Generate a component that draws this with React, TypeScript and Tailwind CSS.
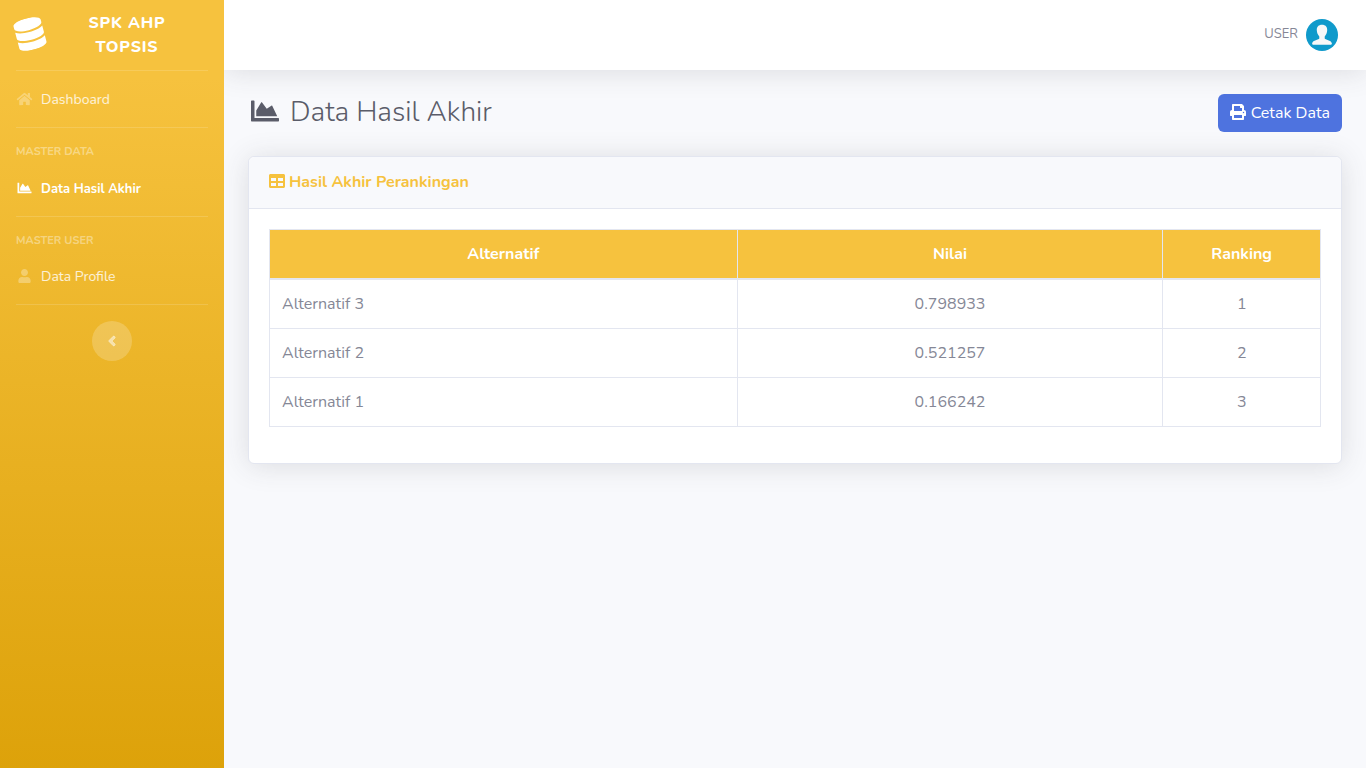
import { FaAngleLeft, FaChartArea, FaDatabase, FaHome, FaPrint, FaTable, FaUser } from 'react-icons/fa'

interface Result {
  name: string
  value: string
  rank: number
}

const results: Result[] = [
  { name: 'Alternatif 3', value: '0.798933', rank: 1 },
  { name: 'Alternatif 2', value: '0.521257', rank: 2 },
  { name: 'Alternatif 1', value: '0.166242', rank: 3 },
]

function Divider() {
  return <hr className="mx-4 border-t border-white/15" />
}

function Sidebar() {
  return (
    <aside className="flex w-56 shrink-0 flex-col bg-linear-to-b/srgb from-[#f6c23e] from-10% to-[#dda20a]">
      <a href="#" className="flex h-[70px] items-center pr-4 pb-0.5 pl-3.5 text-white">
        <FaDatabase className="size-8 shrink-0 -rotate-15" />
        <span className="mt-0.5 flex-1 px-4 text-center text-base leading-6 font-extrabold tracking-wider uppercase">
          SPK AHP TOPSIS
        </span>
      </a>
      <Divider />
      <nav className="flex flex-col">
        <a href="#" className="flex h-14 items-center gap-2 px-4 pt-0.5 text-sm text-white/80">
          <FaHome className="mb-0.5 h-[14px] w-[17px] text-white/30" />
          Dashboard
        </a>
        <Divider />
        <h2 className="mt-4 px-4 text-[11px] leading-4 font-bold text-white/40 uppercase">Master Data</h2>
        <a href="#" className="flex h-14 items-center gap-2 px-4 pt-1 text-[13px] font-bold text-white">
          <FaChartArea className="mb-1 h-[14px] w-[17px]" />
          Data Hasil Akhir
        </a>
        <Divider />
        <h2 className="mt-4 px-4 text-[11px] leading-4 font-bold text-white/40 uppercase">Master User</h2>
        <a href="#" className="flex h-[55px] items-center gap-2 px-4 text-sm text-white/80">
          <FaUser className="mb-0.5 h-[14px] w-[17px] text-white/30" />
          Data Profile
        </a>
        <Divider />
      </nav>
      <button
        type="button"
        aria-label="Toggle sidebar"
        className="mt-4 flex size-10 items-center justify-center self-center rounded-full bg-white/20 text-white/50"
      >
        <FaAngleLeft className="size-4" stroke="currentColor" strokeWidth={24} />
      </button>
    </aside>
  )
}

function Avatar() {
  return (
    <svg viewBox="0 0 32 32" className="size-8" aria-hidden="true">
      <circle cx="16" cy="16" r="16" fill="#109acb" />
      <path
        d="M16 5.800c-3.400 0-5.400 2.200-5.200 5.500.1 2.500 1 4.600 2.500 6.100v2.200c-.4 1.400-6.500 1.400-7.200 4.900 0 .8.700 1.300 1.500 1.300h16.800c.8 0 1.500-.5 1.500-1.300-.7-3.500-6.800-3.500-7.200-4.900v-2.200c1.500-1.500 2.400-3.600 2.500-6.100C21.400 8 19.400 5.800 16 5.800z"
        fill="#f8f8f8"
      />
    </svg>
  )
}

function Topbar() {
  return (
    <header className="relative flex h-[70px] items-center justify-end bg-white px-7 shadow-[0_2px_28px_rgba(58,59,69,0.15)]">
      <a href="#" className="flex items-center gap-2 text-[13px] text-[#858796]">
        USER
        <Avatar />
      </a>
    </header>
  )
}

export default function App() {
  return (
    <div className="flex min-h-screen bg-[#f8f9fc] font-['Nunito','Open_Sans',sans-serif] text-base text-[#858796]">
      <Sidebar />
      <div className="min-w-0 flex-1 overflow-hidden">
        <Topbar />
        <main className="p-6">
          <div className="mb-6 flex items-start justify-between">
            <h1 className="flex items-center gap-2 text-[28px] leading-9 font-light text-[#5a5c69]">
              <FaChartArea className="mb-0.5 h-7 w-[34px]" />
              Data Hasil Akhir
            </h1>
            <button
              type="button"
              className="flex h-[38px] items-center gap-[5px] rounded-md bg-[#4e73df] px-3 text-white"
            >
              <FaPrint className="mb-0.5 size-4" />
              Cetak Data
            </button>
          </div>

          <section className="rounded-md border border-[#e3e6f0] bg-white shadow-[0_2px_28px_rgba(58,59,69,0.15)]">
            <div className="rounded-t-md border-b border-[#e3e6f0] bg-[#f8f9fc] px-5 pt-3 pb-3.5">
              <h2 className="flex h-[25px] items-center gap-1 font-bold text-[#f6c23e]">
                <FaTable className="mb-0.5 size-4" />
                Hasil Akhir Perankingan
              </h2>
            </div>
            <div className="px-5 pt-5 pb-9">
              <table className="w-full border-collapse">
                <thead>
                  <tr className="bg-[#f6c23e] text-center text-white">
                    <th className="w-[44.5%] border border-b-2 border-[#e3e6f0] p-3">Alternatif</th>
                    <th className="border border-b-2 border-[#e3e6f0] p-3">Nilai</th>
                    <th className="w-[15%] border border-b-2 border-[#e3e6f0] p-3">Ranking</th>
                  </tr>
                </thead>
                <tbody>
                  {results.map((result) => (
                    <tr key={result.rank} className="text-center">
                      <td className="border border-[#e3e6f0] p-3 text-left">{result.name}</td>
                      <td className="border border-[#e3e6f0] p-3">{result.value}</td>
                      <td className="border border-[#e3e6f0] p-3">{result.rank}</td>
                    </tr>
                  ))}
                </tbody>
              </table>
            </div>
          </section>
        </main>
      </div>
    </div>
  )
}
